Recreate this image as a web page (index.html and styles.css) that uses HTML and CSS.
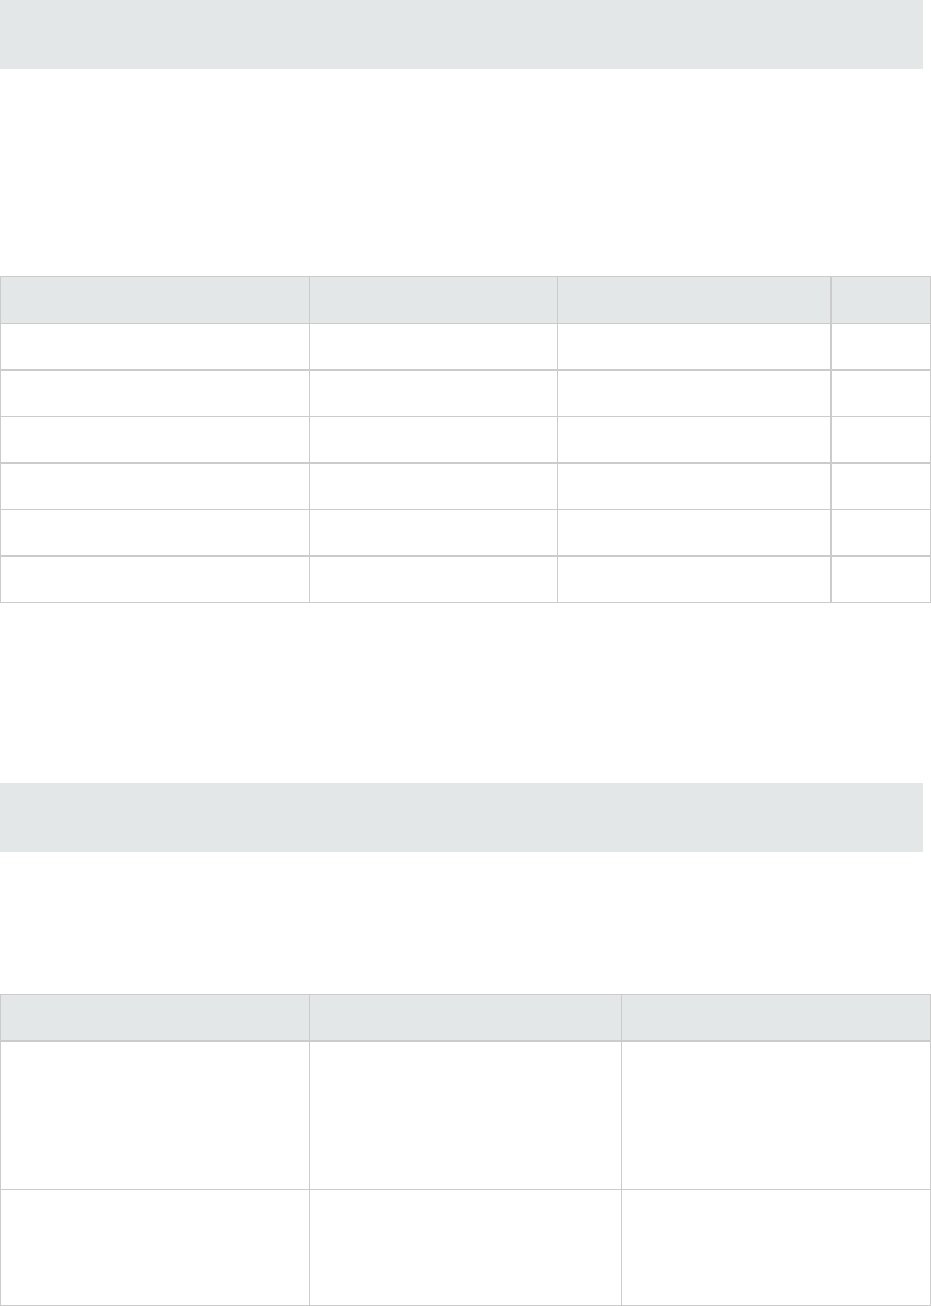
FILE: index.html
```html
<!DOCTYPE html>
<html lang="en">
<head>
<meta charset="utf-8">
<title>Page</title>
<link rel="stylesheet" href="styles.css">
</head>
<body>
<div class="page">
  <div class="banner banner-top"></div>
  <table class="grid grid-one">
    <colgroup>
      <col class="c1a"><col class="c1b"><col class="c1c"><col class="c1d">
    </colgroup>
    <thead>
      <tr class="h47"><th></th><th></th><th class="thick-r"></th><th></th></tr>
    </thead>
    <tbody>
      <tr class="h46 thick-b"><td></td><td></td><td class="thick-r"></td><td></td></tr>
      <tr class="h47"><td></td><td></td><td class="thick-r"></td><td></td></tr>
      <tr class="h46 thick-b"><td></td><td></td><td class="thick-r"></td><td></td></tr>
      <tr class="h47"><td></td><td></td><td class="thick-r"></td><td></td></tr>
      <tr class="h46 thick-b"><td></td><td></td><td class="thick-r"></td><td></td></tr>
      <tr class="h47"><td></td><td></td><td class="thick-r"></td><td></td></tr>
    </tbody>
  </table>
  <div class="banner banner-mid"></div>
  <table class="grid grid-two">
    <colgroup>
      <col class="c2a"><col class="c2b"><col class="c2c">
    </colgroup>
    <thead>
      <tr class="h46 thick-b"><th></th><th></th><th></th></tr>
    </thead>
    <tbody>
      <tr class="h149"><td></td><td></td><td></td></tr>
      <tr class="h116 thick-b"><td></td><td></td><td></td></tr>
    </tbody>
  </table>
</div>
</body>
</html>
```

FILE: styles.css
```css
html, body {
  margin: 0;
  padding: 0;
  background: #ffffff;
  font-family: "Liberation Sans", Arial, sans-serif;
}

.page {
  width: 931px;
  display: flex;
  flex-direction: column;
  align-items: flex-start;
}

.banner {
  width: 923px;
  height: 69px;
  background: #e3e7e8;
}

.banner-top {
  margin-bottom: 207px;
}

.banner-mid {
  margin-bottom: 142px;
}

.grid {
  width: 930px;
  border-collapse: collapse;
  table-layout: fixed;
}

.grid-one {
  margin-bottom: 180px;
}

.grid th,
.grid td {
  border: 1px solid #cbcbcb;
  padding: 0;
}

.grid th {
  background: #e3e7e8;
}

.grid td {
  background: #ffffff;
}

.c1a { width: 309px; }
.c1b { width: 248px; }
.c1c { width: 273px; }
.c1d { width: 100px; }

.c2a { width: 309px; }
.c2b { width: 312px; }
.c2c { width: 309px; }

.h46 { height: 46px; }
.h47 { height: 47px; }
.h149 { height: 149px; }
.h116 { height: 116px; }

.grid .thick-b > td,
.grid .thick-b > th {
  border-bottom-width: 2px;
}

.grid .thick-r {
  border-right-width: 2px;
}
```
